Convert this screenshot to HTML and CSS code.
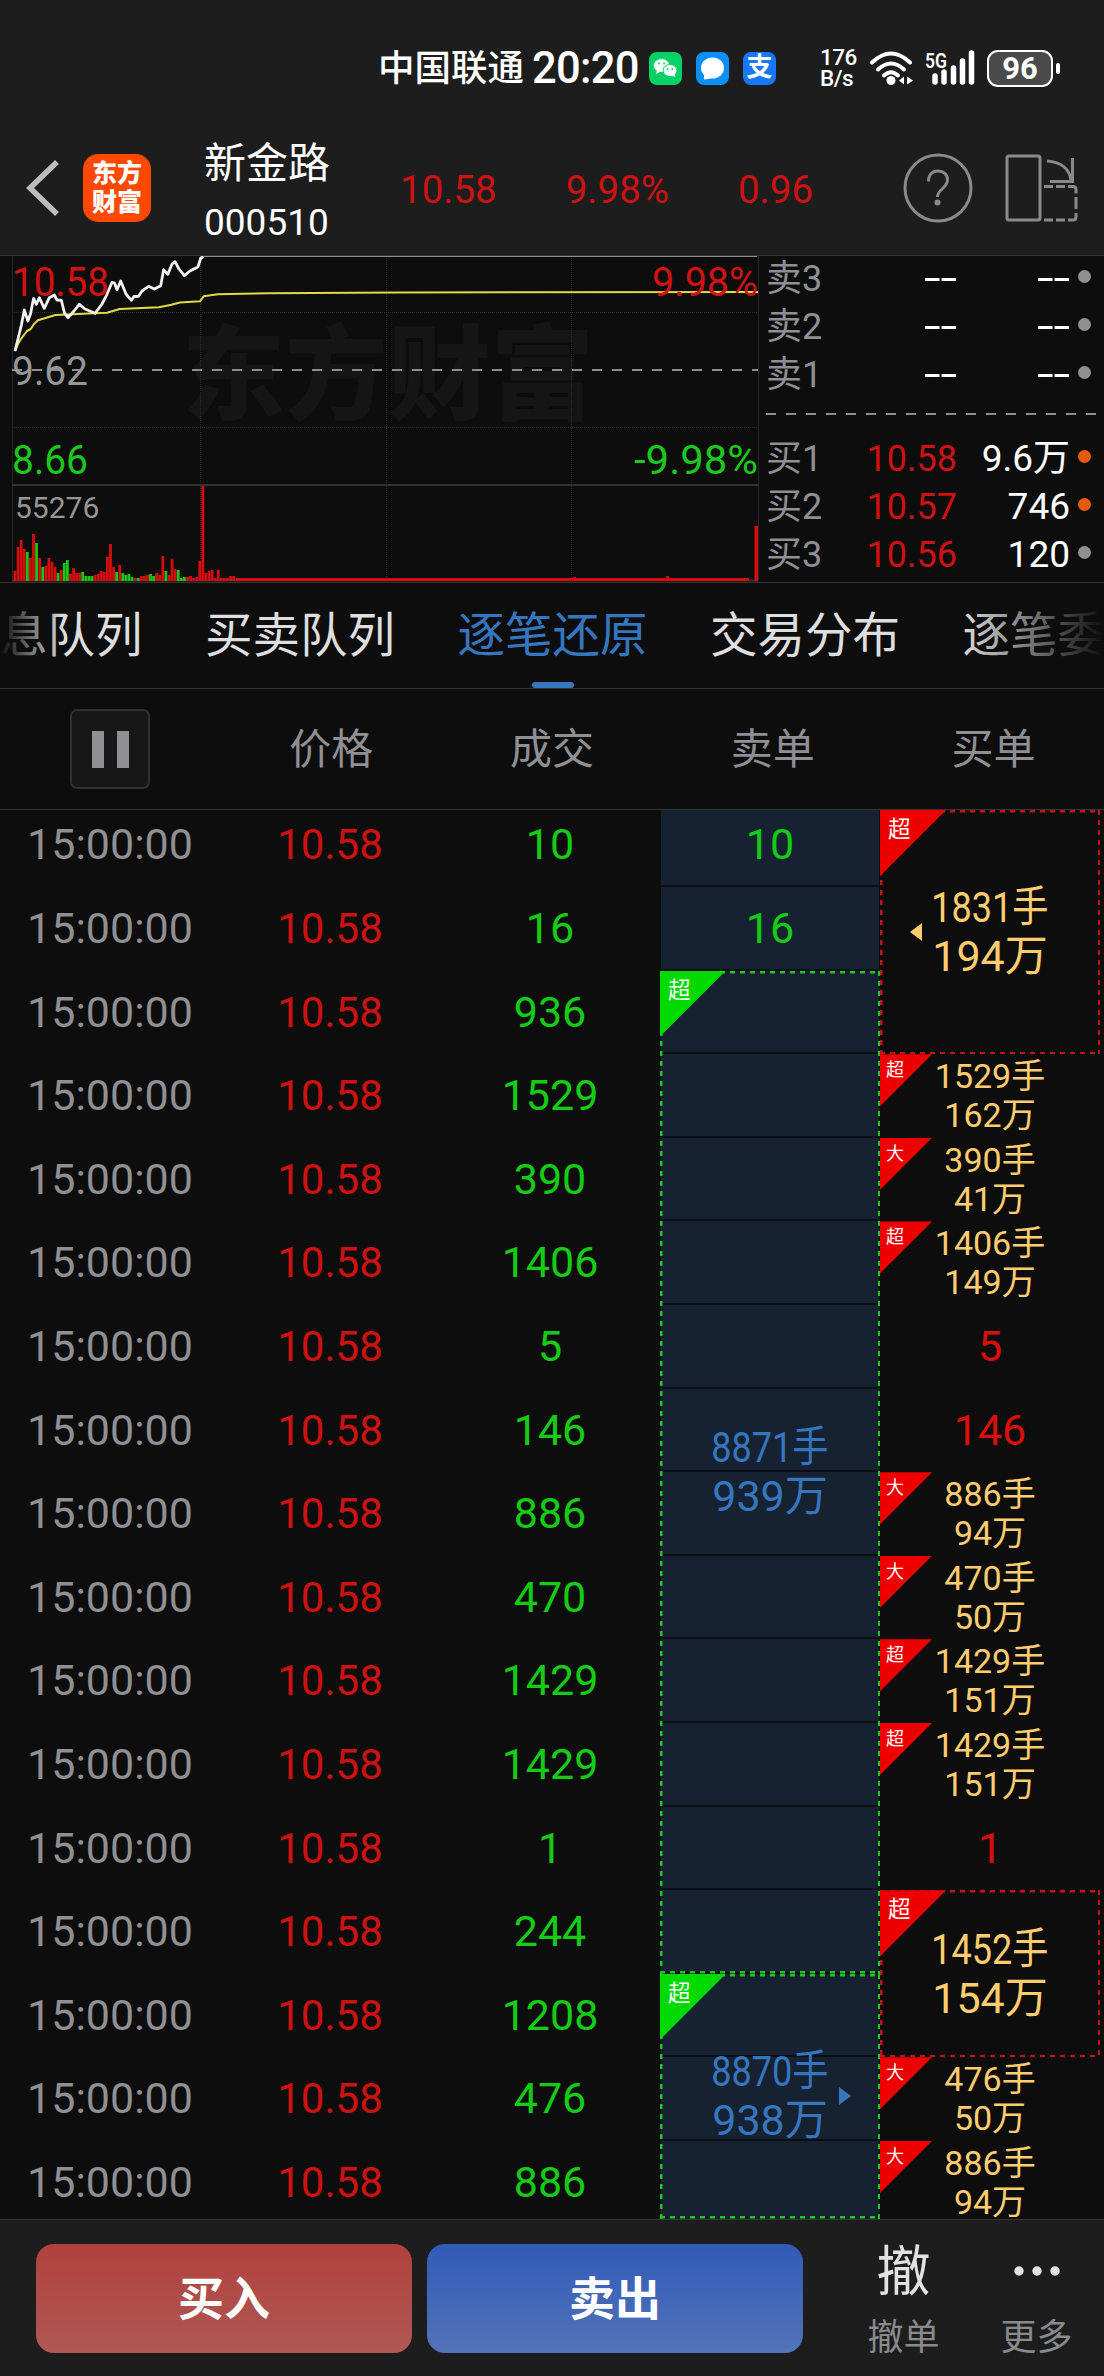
FILE: index.html
```html
<!DOCTYPE html>
<html lang="zh-CN">
<head>
    <meta charset="UTF-8">
    <meta name="viewport" content="width=device-width, initial-scale=1.0">
    <title>新金路 000510 - 逐笔还原</title>
    <link rel="stylesheet" href="styles.css">
</head>
<body>
    <header class="top">
        <div class="status">
            <span class="carrier">中国联通</span>
            <span class="clock">20:20</span>
            <svg class="app" viewBox="0 0 33 33">
                <rect width="33" height="33" rx="8" fill="#06d167"/>
                <ellipse cx="12.500" cy="13.500" rx="7.800" ry="6.500" fill="#fff"/>
                <path d="M8 18l-1 4 4-2z" fill="#fff"/>
                <ellipse cx="21" cy="18.500" rx="7" ry="6" fill="#fff" stroke="#06d167"/>
                <path d="M22 23l4 2-.5-4z" fill="#fff"/>
                <g fill="#06d167"><circle cx="10" cy="11.500" r="1"/><circle cx="15" cy="11.500" r="1"/><circle cx="18.700" cy="17" r=".9"/><circle cx="23.200" cy="17" r=".9"/></g>
            </svg>
            <svg class="app" viewBox="0 0 33 33">
                <rect width="33" height="33" rx="8" fill="#0b8ffb"/>
                <ellipse cx="16.500" cy="16" rx="11.500" ry="10.500" fill="#fff"/>
                <path d="M8 21v6.500c4 0 7-1 9-3z" fill="#fff"/>
            </svg>
            <span class="app alipay">支</span>
            <span class="speed">176<br>B/s</span>
            <svg class="wifi" viewBox="0 0 46 36">
                <g fill="none" stroke="#fff" stroke-width="4" stroke-linecap="round">
                    <path d="M3 12.500Q22 -5.500 41 12.500"/>
                    <path d="M9 19.500Q22 7.500 35 19.500"/>
                    <path d="M15 25.500Q22 19 29 25.500"/>
                </g>
                <circle cx="22" cy="30.500" r="4.500" fill="#fff"/>
                <path d="M35 26.500v8l-5-4zM38 26.500v8l6-4z" fill="#fff"/>
            </svg>
            <svg class="signal" viewBox="0 0 50 36">
                <text x="0" y="17.500" textLength="22" lengthAdjust="spacingAndGlyphs">5G</text>
                <path d="M10 26v6M19 22v10M28.500 18v14M37.500 11v21M46.500 3v29" stroke="#fff" stroke-width="5.500" stroke-linecap="round"/>
            </svg>
            <span class="battery">96</span>
        </div>

        <div class="title-bar">
            <svg class="back" viewBox="0 0 36 58"><path d="M32 3L5 29 32 55" fill="none" stroke="#bdbdbd" stroke-width="5.500"/></svg>
            <span class="logo">东方<br>财富</span>
            <div class="stock">
                <span class="name">新金路</span>
                <span class="code">000510</span>
            </div>
            <div class="quote">
                <span>10.58</span>
                <span>9.98%</span>
                <span>0.96</span>
            </div>
            <svg class="help" viewBox="0 0 70 70">
                <g fill="none" stroke="#8a8a8a" stroke-width="3">
                    <circle cx="35" cy="35" r="33"/>
                    <path d="M25.500 28.500c0-7 4-10.500 9.500-10.500s9.500 3.500 9.500 9c0 8-10 9-10 17"/>
                </g>
                <circle cx="34.500" cy="49.500" r="3" fill="#8a8a8a"/>
            </svg>
            <svg class="rotate" viewBox="0 0 74 68">
                <g fill="none" stroke="#8a8a8a" stroke-width="3">
                    <rect x="2" y="2" width="33" height="64" rx="2"/>
                    <path d="M42 7c14 1 23 8 24 20"/>
                    <path d="M67.500 4v23.500H45"/>
                    <path d="M39 32.500h9M51 32.500h9M63 32.500h5q3 0 3 3v4M71 43v12M71 59v4q0 3-3 3h-5M60 66h-9M48 66h-9"/>
                </g>
            </svg>
        </div>
    </header>

    <section class="market">
        <svg class="chart" width="759" height="326" viewBox="0 0 759 326">
            <text class="watermark" x="182" y="156" textLength="412">东方财富</text>
            <g class="grid">
                <path d="M200.500 0v325M386.500 0v325M571.500 0v325M12 56.500h746M12 171.500h746"/>
            </g>
            <path d="M12.500 0v325M758.500 0v325" stroke="#262628"/>
            <path d="M12 229h746M12 324.500h746" stroke="#333335" stroke-width="2"/>
            <path d="M12 114h746" stroke="#8e8e8e" stroke-width="2" stroke-dasharray="10 10"/>
            <g id="volume"></g>
            <path d="M204 .5H757" stroke="#8e8e8e"/>
            <polyline class="avg" points="15,95 18,88 21.400,82.300 27,75 30.700,73 34,68 37.900,64.300 46.400,61.700 55.400,59 95,57.300 107,56.700 119.600,53 159,51.300 171.400,48.700 180,46.500 200,45.300 203.600,40.300 217.900,38.300 268,37.300 400,36.500 758,36"/>
            <polyline class="price" points="15,95 21.400,69 24.300,54 27.900,65 30.500,58 33.600,42.300 36.400,48.300 39.300,41.700 44.300,52.300 49.300,41.700 54.300,39 57,44 61.400,44.300 64.500,57 67.900,61.700 74,55 79.300,48.300 85,53 95,57.300 102,48 107,38.300 112,26.300 114.500,27 117,33.700 120.700,25 126,38 131.400,44.300 134,40.500 138.600,40.300 142,35 148.600,30.300 154.300,33 160.700,29.700 163.600,13.700 167.900,18.300 172,8 175,5.700 179,13 184.300,19.700 190,15 197.900,11 200.700,2.300 203.600,.5"/>
            <text class="label up" x="12" y="40" textLength="97" lengthAdjust="spacingAndGlyphs">10.58</text>
            <text class="label flat" x="12" y="129" textLength="76" lengthAdjust="spacingAndGlyphs">9.62</text>
            <text class="label down" x="12" y="218" textLength="76" lengthAdjust="spacingAndGlyphs">8.66</text>
            <text class="label up" x="652" y="40" textLength="106" lengthAdjust="spacingAndGlyphs">9.98%</text>
            <text class="label down" x="634" y="218" textLength="124" lengthAdjust="spacingAndGlyphs">-9.98%</text>
            <text class="label flat vol" x="15" y="262">55276</text>
        </svg>
        <div class="book">
            <div class="level"><span>卖3</span><b class="none">--</b><i class="none">--</i><em></em></div>
            <div class="level"><span>卖2</span><b class="none">--</b><i class="none">--</i><em></em></div>
            <div class="level"><span>卖1</span><b class="none">--</b><i class="none">--</i><em></em></div>
            <div class="divider"></div>
            <div class="level"><span>买1</span><b>10.58</b><i>9.6万</i><em class="hot"></em></div>
            <div class="level"><span>买2</span><b>10.57</b><i>746</i><em class="hot"></em></div>
            <div class="level"><span>买3</span><b>10.56</b><i>120</i><em></em></div>
        </div>
    </section>

    <nav class="tabs">
        <span>息队列</span>
        <span>买卖队列</span>
        <span class="active">逐笔还原</span>
        <span>交易分布</span>
        <span>逐笔委</span>
    </nav>

    <div class="columns">
        <span><button class="pause"></button></span>
        <span class="head">价格</span>
        <span class="head">成交</span>
        <span class="head">卖单</span>
        <span class="head">买单</span>
    </div>

    <main class="viewport">
        <div class="ticks" id="ticks"></div>
    </main>

    <footer class="bottom">
        <button class="trade buy">买入</button>
        <button class="trade sell">卖出</button>
        <div class="action"><strong>撤</strong><span>撤单</span></div>
        <div class="action">
            <svg viewBox="0 0 48 54"><g fill="#e2e2e2"><circle cx="6" cy="27" r="4.700"/><circle cx="24" cy="27" r="4.700"/><circle cx="42" cy="27" r="4.700"/></g></svg>
            <span>更多</span>
        </div>
    </footer>

    <script>
        // volume bars: height, "g" = down minute
        const volume = "10 34 41 32 29g 23 47 38g 23 14g 15 23 19 14 8g 11 18g 21g 7 13 8 8 9g 5g 5g 5g 6 7 10 9 24 37 14 9g 16 8g 6g 7g 4g 3 3g 5 5 6 7g 5g 8 6 25 10g 6 22 12 11g 3g 4g 4 5 3 4 20 95 8 10 11 3 11 3 3 3 5 5".split(" ");
        let bars = "";
        volume.forEach((v, i) => {
            const h = parseInt(v);
            bars += `<rect x="${(13.6 + i * 3.08).toFixed(2)}" y="${325 - h}" width="2.8" height="${h}" class="${v.endsWith("g") ? "g" : "r"}"/>`;
        });
        bars += '<path class="r" d="M236 322H573V321H576V322H666V320H669V322H749V325H236zM754.500 270h3.500v55h-3.500z"/>';
        document.getElementById("volume").innerHTML = bars;

        const deals = [10, 16, 936, 1529, 390, 1406, 5, 146, 886, 470, 1429, 1429, 1, 244, 1208, 476, 886];

        // row, span, hands, amount, tag, arrow
        const sells = [
            [3, 12, "8871手", "939万", "超", ""],
            [15, 3, "8870手", "938万", "超", "right"]
        ];
        const buys = [
            [1, 3, "1831手", "194万", "超", "left"],
            [4, 1, "1529手", "162万", "超"],
            [5, 1, "390手", "41万", "大"],
            [6, 1, "1406手", "149万", "超"],
            [7, 1, "5"],
            [8, 1, "146"],
            [9, 1, "886手", "94万", "大"],
            [10, 1, "470手", "50万", "大"],
            [11, 1, "1429手", "151万", "超"],
            [12, 1, "1429手", "151万", "超"],
            [13, 1, "1"],
            [14, 2, "1452手", "154万", "超", ""],
            [16, 1, "476手", "50万", "大"],
            [17, 1, "886手", "94万", "大"]
        ];

        function order(side, o) {
            const [row, span, hands, amount, tag, arrow] = o;
            const place = `style="grid-row:${row} / span ${span}"`;
            if (!amount) return `<div class="${side} single" ${place}>${hands}</div>`;
            let edge = row === 1 ? " first" : row + span > 17 ? " last" : "";
            return `<div class="${side} ${span > 1 ? "big" : "small"}${edge}" ${place}>
                <span class="tag"><u>${tag}</u></span>
                ${arrow ? `<span class="arrow ${arrow}"></span>` : ""}
                <span class="hands">${hands}</span><span>${amount}</span></div>`;
        }

        let html = "";
        deals.forEach((d, i) => {
            const place = `style="grid-row:${i + 1}"`;
            html += `<div class="time" ${place}>15:00:00</div><div class="cost" ${place}>10.58</div><div class="deal" ${place}>${d}</div>`;
            html += `<div class="slot" ${place}>${i < 2 ? d : ""}</div>`;
        });
        sells.forEach(o => html += order("ask", o));
        buys.forEach(o => html += order("bid", o));
        document.getElementById("ticks").innerHTML = html;
    </script>
</body>
</html>
```
FILE: styles.css
```css
* {
    box-sizing: border-box;
}
body {
    margin: 0;
    width: 1104px;
    height: 2376px;
    overflow: hidden;
    display: flex;
    flex-direction: column;
    background: #0d0d0d;
    color: #fff;
    font-family: Roboto, "Noto Sans CJK SC", sans-serif;
}
button {
    font-family: inherit;
    border: none;
    padding: 0;
}

/* status bar + title */
.top {
    height: 256px;
    background: #1d1d1d;
    border-bottom: 1px solid #333;
}
.status {
    height: 120px;
    padding: 16px 0 0 378px;
    display: flex;
    align-items: center;
}
.carrier {
    width: 154px;
    padding-bottom: 5px;
    font-size: 36.500px;
    font-weight: 500;
}
.clock {
    width: 117px;
    font-size: 43.500px;
    font-weight: 500;
    letter-spacing: -0.7px;
}
.app {
    width: 33px;
    height: 33px;
    margin-right: 14px;
    flex: none;
}
.alipay {
    border-radius: 8px;
    background: #1777fe;
    font-size: 26px;
    font-weight: 700;
    line-height: 30px;
    text-align: center;
    margin-right: 44px;
}
.speed {
    width: 49px;
    font-size: 22.500px;
    line-height: 21.500px;
    font-weight: 500;
    letter-spacing: -0.5px;
}
.wifi {
    width: 46px;
    height: 36px;
    margin-right: 10px;
    flex: none;
}
.signal {
    width: 50px;
    height: 36px;
    margin-right: 12px;
    flex: none;
    overflow: visible;
}
.signal text {
    font-size: 21px;
    font-weight: 600;
    fill: #fff;
}
.battery {
    position: relative;
    width: 66px;
    height: 37px;
    border: 2.500px solid #fff;
    border-radius: 11px;
    background: #4a4a4a;
    font-size: 31px;
    font-weight: 700;
    line-height: 33px;
    text-align: center;
}
.battery::after {
    content: "";
    position: absolute;
    right: -9px;
    top: 11px;
    width: 4px;
    height: 11px;
    border-radius: 2px;
    background: #fff;
}
.title-bar {
    height: 135px;
    padding-left: 25px;
    display: flex;
    align-items: center;
}
.back {
    width: 36px;
    height: 58px;
    margin-right: 22px;
}
.logo {
    width: 68px;
    height: 68px;
    margin-right: 53px;
    padding-top: 5px;
    border-radius: 15px;
    background: #ff4800;
    font-size: 25px;
    font-weight: 900;
    line-height: 29px;
    text-align: center;
}
.stock {
    width: 196px;
    padding-top: 11px;
    display: flex;
    flex-direction: column;
}
.name {
    font-size: 42px;
    line-height: 60px;
}
.code {
    font-size: 37px;
    line-height: 58px;
}
.quote {
    width: 503px;
    padding-top: 3px;
    display: flex;
    gap: 69px;
    font-size: 38.500px;
    color: #cc1212;
}
.help {
    width: 70px;
    height: 70px;
    margin-right: 32px;
    flex: none;
}
.rotate {
    width: 74px;
    height: 68px;
    flex: none;
}

/* chart + order book */
.market {
    height: 327px;
    display: flex;
    border-bottom: 1px solid #333;
}
.chart {
    flex: none;
}
.watermark {
    font-size: 103px;
    font-weight: 900;
    fill: #151515;
}
.grid path {
    stroke: #2b2b2b;
    stroke-dasharray: 1 1;
}
.price, .avg {
    fill: none;
    stroke: #f2f2f2;
    stroke-width: 2.800;
    stroke-linejoin: round;
}
.avg {
    stroke: #e2da45;
    stroke-width: 2;
}
.label {
    font-size: 40px;
}
.label.vol {
    font-size: 30px;
}
.up {
    fill: #d01212;
}
.down {
    fill: #1cc81c;
}
.flat {
    fill: #969696;
}
.r {
    fill: #d80c0c;
}
.g {
    fill: #16c616;
}
.book {
    flex: 1;
    margin-top: -1px;
    padding-left: 7px;
}
.level {
    display: grid;
    grid-template-columns: 70px 121px 113px 15px;
    height: 48px;
    align-items: center;
    font-size: 37px;
    line-height: 48px;
}
.level span {
    color: #8f8f94;
    font-size: 36px;
}
.level b, .level i {
    font-weight: 400;
    font-style: normal;
    text-align: right;
    color: #cc1212;
}
.level b {
    font-size: 36px;
}
.level i {
    color: #fff;
}
.level .none {
    justify-self: end;
    color: #fff;
    font-size: 40px;
    line-height: 44px;
    transform: scaleX(1.5);
    transform-origin: right;
}
.level em {
    width: 13px;
    height: 13px;
    margin: 0 -8px 5px 8px;
    border-radius: 50%;
    background: #8f8f94;
}
.level em.hot {
    background: #e85b08;
}
.divider {
    height: 36px;
    margin-right: 8px;
    background: repeating-linear-gradient(90deg, #8e8e8e 0 10px, transparent 10px 20px) 0 14px / 100% 2px no-repeat;
}

/* tabs */
.tabs {
    position: relative;
    height: 106px;
    display: flex;
    gap: 62.500px;
    border-bottom: 1px solid #333;
    font-size: 47.500px;
    line-height: 107px;
    color: #dedede;
    white-space: nowrap;
    overflow: hidden;
}
.tabs::after {
    content: "";
    position: absolute;
    inset: 0;
    background: linear-gradient(90deg, #0d0d0d 0, transparent 64px, transparent 960px, #0d0d0d 1104px);
}
.active {
    position: relative;
    color: #3576bf;
}
.active::after {
    content: "";
    position: absolute;
    left: 74px;
    bottom: 0;
    width: 42px;
    height: 6px;
    border-radius: 3px;
    background: #3576bf;
}
.columns {
    height: 121px;
    display: grid;
    grid-template-columns: repeat(5, 1fr);
    align-items: center;
    justify-items: center;
    border-bottom: 1px solid #333;
    font-size: 42px;
    color: #8f8f94;
}
.columns span {
    display: flex;
}
.columns .head {
    padding-bottom: 7px;
}
.pause {
    width: 80px;
    height: 80px;
    border: 2px solid #303030;
    border-radius: 7px;
    background: linear-gradient(90deg, #8f8f94 12px, transparent 12px 25px, #8f8f94 25px) center / 37px 37px no-repeat #171717;
}

/* tick list */
.viewport {
    height: 1409px;
    overflow: hidden;
}
.ticks {
    margin-top: -6.600px;
    width: 1100px;
    display: grid;
    grid-template-columns: repeat(5, 220px);
    grid-template-rows: repeat(17, 83.600px);
    font-size: 43px;
    text-align: center;
    line-height: 83px;
}
.time {
    grid-column: 1;
    color: #8f8f94;
}
.cost {
    grid-column: 2;
    font-size: 42px;
    color: #cc1212;
}
.deal {
    grid-column: 3;
    color: #14cc14;
}
.slot {
    grid-column: 4;
    margin: 0 1px;
    background: #162231;
    border-bottom: 2px solid #0b0f13;
    color: #14cc14;
}
.ask, .bid {
    position: relative;
    display: flex;
    flex-direction: column;
    align-items: center;
    justify-content: center;
}
.ask {
    grid-column: 4;
    color: #3576bf;
    --line: #1fc41f;
    --tag: #00da00;
}
.bid {
    grid-column: 5;
    color: #ffcd70;
    --line: #c01616;
    --tag: #ee0000;
}
.bid.single {
    color: #d80f0f;
}
.big {
    line-height: 49px;
    background:
        repeating-linear-gradient(90deg, var(--line) 0 5px, transparent 5px 10px) 0 0 / 100% 2.500px no-repeat,
        repeating-linear-gradient(90deg, var(--line) 0 5px, transparent 5px 10px) 0 100% / 100% 2.500px no-repeat,
        repeating-linear-gradient(var(--line) 0 5px, transparent 5px 10px) 0 0 / 2.500px 100% no-repeat,
        repeating-linear-gradient(var(--line) 0 5px, transparent 5px 10px) 100% 0 / 2.500px 100% no-repeat;
}
.big .hands {
    transform: scaleX(0.84);
}
.small {
    font-size: 34px;
    line-height: 39px;
}
.first {
    margin-top: 6.600px;
}
.big.last {
    margin-bottom: 5.600px;
}
.tag {
    position: absolute;
    left: 0;
    top: 0;
    width: 52px;
    height: 52px;
    padding: 6px 0 0 6px;
    background: var(--tag);
    clip-path: polygon(0 0, 100% 0, 0 100%);
    color: #fff;
    font-size: 18px;
    line-height: 20px;
    text-align: left;
}
.big .tag {
    width: 66px;
    height: 66px;
    padding: 7px 0 0 8px;
    font-size: 22.500px;
    line-height: 25px;
}
.tag u {
    text-decoration: none;
}
.arrow {
    position: absolute;
    top: calc(50% - 9px);
    border: 9px solid transparent;
}
.arrow.left {
    left: 21px;
    border-right: 12px solid #ffcd70;
}
.arrow.right {
    right: 20px;
    border-left: 12px solid #3576bf;
}

/* footer */
.bottom {
    flex: 1;
    display: flex;
    padding: 24px 0 0 36px;
    background: #1d1d1d;
    border-top: 1px solid #333;
}
.trade {
    width: 376px;
    height: 109px;
    margin-right: 15px;
    padding-bottom: 7px;
    border-radius: 18px;
    color: #fff;
    font-size: 46px;
    font-weight: 700;
}
.buy {
    background: linear-gradient(#b1413d, #ae5855);
}
.sell {
    background: linear-gradient(#305bb8, #5373b9);
    margin-right: 34px;
}
.action {
    width: 133px;
    display: flex;
    flex-direction: column;
    align-items: center;
    color: #8a8a8e;
    font-size: 36px;
    line-height: 50px;
}
.action strong, .action svg {
    height: 54px;
    margin-bottom: 15px;
    font-size: 54px;
    font-weight: 400;
    line-height: 58px;
    color: #e2e2e2;
}
```
